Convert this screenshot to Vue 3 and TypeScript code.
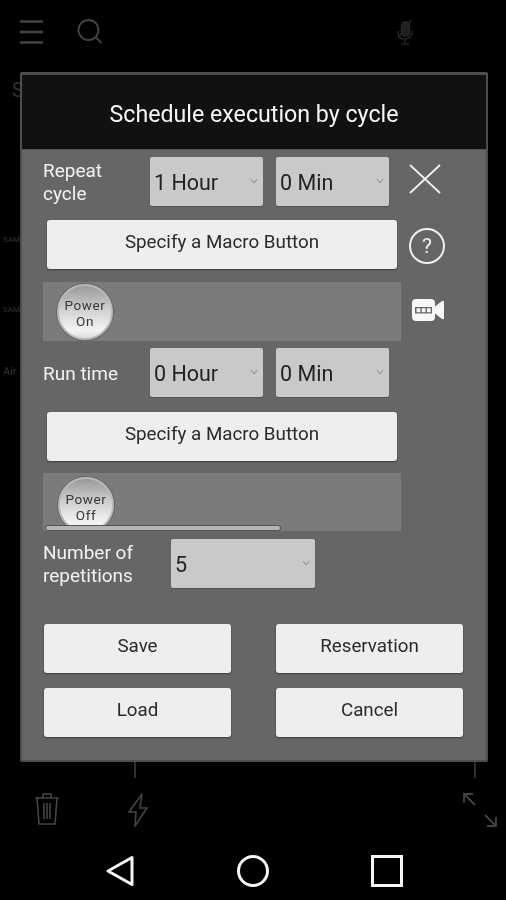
<template>
  <div class="screen">
    <!-- dimmed labels of the page under the dialog -->
    <span
      v-for="label in behindLabels"
      :key="label.text + label.top"
      class="behind"
      :style="{ top: label.top + 'px', fontSize: label.size + 'px' }"
    >{{ label.text }}</span>

    <header class="topbar">
      <svg class="ic-menu" width="26" height="26" viewBox="0 0 26 26" fill="none" stroke="#444" stroke-width="2.4">
        <path d="M2 2.500h23M2 13h23M2 23.500h23" />
      </svg>
      <svg class="ic-search" width="26" height="26" viewBox="0 0 26 26" fill="none" stroke="#444" stroke-width="1.8">
        <circle cx="11.500" cy="11" r="10" />
        <path d="M18.500 18l6 6" />
      </svg>
      <svg class="ic-mic" width="20" height="26" viewBox="0 0 20 26" fill="none" stroke="#262626" stroke-width="1.6">
        <rect x="6.500" y="3" width="8" height="14" rx="4" fill="#1e1e1e" />
        <path d="M3 12c0 5 3 8 7 8s7-3 7-8M10 20v4M6 25h8M3 19L16 1" />
      </svg>
    </header>

    <section class="dialog">
      <h1 class="title">Schedule execution by cycle</h1>
      <div class="body">
        <div class="row row-first">
          <div class="main fields">
            <label class="label">Repeat<br />cycle</label>
            <div v-for="v in ['1 Hour', '0 Min']" :key="v" class="select">
              <span>{{ v }}</span>
              <svg width="8" height="6" viewBox="0 0 8 6" fill="none" stroke="#8a8a8a" stroke-width="1"><path d="M1 1l3 4 3-4" /></svg>
            </div>
          </div>
          <div class="side">
            <svg class="ic-close" width="32" height="30" viewBox="0 0 32 30" fill="none" stroke="#f0f0f0" stroke-width="1.8">
              <path d="M1 1l30 28M31 1L1 29" />
            </svg>
          </div>
        </div>

        <div class="row row-macro">
          <div class="main"><button class="btn macro">Specify a Macro Button</button></div>
          <div class="side">
            <span class="help">?</span>
          </div>
        </div>

        <div class="row row-panel">
          <div class="main panel">
            <div class="power">Power<br />On</div>
          </div>
          <div class="side">
            <svg class="ic-video" width="32" height="24" viewBox="0 0 32 24">
              <path fill="#f7f7f7" d="M4 1h15a4 4 0 0 1 4 4v3.500L30 3h2v18h-2l-7-5.500V19a4 4 0 0 1-4 4H4a4 4 0 0 1-4-4V5a4 4 0 0 1 4-4z" />
              <path fill="#666" d="M3 9h17v6.500H3z" />
              <path fill="#f7f7f7" d="M4.500 10.300h3.800v4H4.500zM9.700 10.300h3.800v4H9.700zM14.900 10.300h3.800v4h-3.800z" />
            </svg>
          </div>
        </div>

        <div class="row row-run">
          <div class="main fields">
            <label class="label">Run time</label>
            <div v-for="v in ['0 Hour', '0 Min']" :key="v" class="select">
              <span>{{ v }}</span>
              <svg width="8" height="6" viewBox="0 0 8 6" fill="none" stroke="#8a8a8a" stroke-width="1"><path d="M1 1l3 4 3-4" /></svg>
            </div>
          </div>
        </div>

        <div class="row row-macro2">
          <div class="main"><button class="btn macro">Specify a Macro Button</button></div>
        </div>

        <div class="row row-panel2">
          <div class="main panel panel-off">
            <div class="power power-off">Power<br />Off</div>
            <div class="scrollbar"></div>
          </div>
        </div>

        <div class="row row-reps">
          <div class="main fields">
            <label class="label label-wide">Number of<br />repetitions</label>
            <div class="select select-wide">
              <span>5</span>
              <svg width="8" height="6" viewBox="0 0 8 6" fill="none" stroke="#8a8a8a" stroke-width="1"><path d="M1 1l3 4 3-4" /></svg>
            </div>
          </div>
        </div>

        <div class="actions">
          <button v-for="a in actions" :key="a" class="btn action">{{ a }}</button>
        </div>
      </div>
    </section>

    <div class="tools">
      <i class="tick tick-a"></i>
      <i class="tick tick-b"></i>
      <svg class="ic-trash" width="26" height="34" viewBox="0 0 26 34" fill="none" stroke="#444" stroke-width="1.6">
        <path d="M1 6h24M9 6V2h8v4M3 6l2 26h16l2-26M10 11v16M13 11v16M16 11v16" />
      </svg>
      <svg class="ic-bolt" width="22" height="34" viewBox="0 0 22 34" fill="none" stroke="#444" stroke-width="1.6">
        <path d="M15 1L2 19h7L8 33l12-18h-7z" />
      </svg>
      <svg class="ic-expand" width="36" height="36" viewBox="0 0 36 36" fill="none" stroke="#444" stroke-width="1.8">
        <path d="M2 11V2h9M2 2l11 11M34 25v9h-9M34 34L23 23" />
      </svg>
    </div>

    <nav class="navbar">
      <svg width="30" height="32" viewBox="0 0 30 32" fill="none" stroke="#f5f5f5" stroke-width="3">
        <path d="M27 2.500v27L3 16z" stroke-linejoin="round" />
      </svg>
      <svg width="32" height="32" viewBox="0 0 32 32" fill="none" stroke="#f5f5f5" stroke-width="3">
        <circle cx="16" cy="16" r="14.500" />
      </svg>
      <svg width="32" height="32" viewBox="0 0 32 32" fill="none" stroke="#f5f5f5" stroke-width="3">
        <rect x="1.500" y="1.500" width="29" height="29" />
      </svg>
    </nav>
  </div>
</template>

<script setup lang="ts">
const behindLabels = [
  { text: 'S', top: 78, size: 20 },
  { text: 'SAM', top: 235, size: 8 },
  { text: 'SAM', top: 305, size: 8 },
  { text: 'Air', top: 365, size: 11 },
]

const actions = ['Save', 'Reservation', 'Load', 'Cancel']
</script>

<style>
html,
body {
  background: #000;
}
</style>

<style scoped>
.screen {
  position: relative;
  width: 506px;
  height: 900px;
  overflow: hidden;
  background: #000;
  font-family: Roboto, 'Liberation Sans', sans-serif;
  filter: blur(0.5px);
}

.behind {
  position: absolute;
  left: 3px;
  color: #333;
  line-height: 1.2;
}
.behind:first-of-type {
  left: 12px;
}

.topbar {
  display: flex;
  align-items: center;
  height: 72px;
  padding: 0 0 8px 18px;
  box-sizing: border-box;
}
.ic-search {
  margin-left: 33px;
}
.ic-mic {
  margin-left: 292px;
}

.dialog {
  position: relative;
  width: 468px;
  height: 690px;
  margin-left: 20px;
  box-sizing: border-box;
  border: 2px solid #4e4e4e;
  border-top-width: 3px;
  border-radius: 2px;
  background: #666;
  display: flex;
  flex-direction: column;
}

.title {
  margin: 0;
  height: 75px;
  flex: none;
  display: flex;
  align-items: center;
  justify-content: center;
  padding-top: 3px;
  box-sizing: border-box;
  background: #111;
  border-bottom: 1px solid #555;
  color: #f6f6f6;
  font-size: 23.2px;
  font-weight: 400;
}

.body {
  padding: 7px 0 0 21px;
}

.row {
  display: flex;
  align-items: center;
}
.main {
  width: 358px;
  flex: none;
}
.side {
  width: 52px;
  display: flex;
  justify-content: center;
}

.ic-close {
  margin: -5px 5px 0 0;
}
.ic-video {
  margin: -4px 0 0 1px;
}

.help {
  width: 36px;
  height: 36px;
  margin-top: 3px;
  box-sizing: border-box;
  border: 2px solid #f0f0f0;
  border-radius: 50%;
  display: flex;
  align-items: center;
  justify-content: center;
  color: #f0f0f0;
  font-size: 21px;
}

.row-macro {
  margin-top: 14px;
}
.row-panel {
  margin-top: 13px;
}
.row-run {
  margin-top: 7px;
}
.row-macro2 {
  margin-top: 15px;
}
.row-panel2 {
  margin-top: 12px;
}
.row-reps {
  margin-top: 8px;
}

.fields {
  display: flex;
  align-items: center;
  gap: 13px;
}
.label {
  width: 94px;
  color: #f2f2f2;
  font-size: 19px;
  line-height: 23px;
  padding-top: 1px;
}
.label-wide {
  width: 115px;
}

.select {
  width: 113px;
  height: 49px;
  box-sizing: border-box;
  display: flex;
  align-items: center;
  justify-content: space-between;
  padding: 1px 5px 0 4px;
  border-radius: 2px;
  background: #c9c9c9;
  box-shadow: 0 1px 1px #505050;
  color: #222;
  font-size: 21.5px;
}
.select svg {
  margin-top: -3px;
}
.select-wide {
  width: 144px;
}

.btn {
  display: block;
  height: 49px;
  box-sizing: border-box;
  border: 0;
  border-radius: 3px;
  background: #eee;
  box-shadow: 0 1px 2px #3e3e3e;
  color: #2a2a2a;
  font-family: inherit;
  font-size: 18.8px;
  padding: 0 0 6px;
}
.macro {
  width: 350px;
  margin-left: 4px;
}

.panel {
  position: relative;
  height: 59px;
  box-sizing: border-box;
  padding: 2px 0 0 14px;
  overflow: hidden;
  background: #7c7b7b;
}
.panel-off {
  height: 58px;
  padding: 4px 0 0 15px;
}

.power {
  width: 56px;
  height: 56px;
  box-sizing: border-box;
  border: 2px solid #b9b9b9;
  border-radius: 50%;
  background: linear-gradient(#9a9a9a 0%, #d0d0d0 45%, #f4f4f4 85%, #dcdcdc 100%);
  box-shadow: 0 0 0 1px #666;
  color: #383838;
  font-size: 13.5px;
  line-height: 16px;
  letter-spacing: 0.6px;
  text-align: center;
  padding-top: 11px;
}
.power-off {
  padding-top: 12px;
}

.scrollbar {
  position: absolute;
  left: 3px;
  bottom: 1px;
  width: 234px;
  height: 4px;
  border-radius: 2px;
  background: #b5b5b5;
  box-shadow: 0 0 0 1px #555;
}

.actions {
  display: grid;
  grid-template-columns: 187px 187px;
  column-gap: 45px;
  row-gap: 15px;
  margin: 36px 0 0 1px;
}
.action {
  width: 187px;
  padding-bottom: 6px;
}

.tools {
  position: relative;
  height: 78px;
  display: flex;
  align-items: flex-start;
  padding: 30px 0 0 34px;
  box-sizing: border-box;
}
.tick {
  position: absolute;
  top: 0;
  width: 2px;
  height: 16px;
  background: #2e2e2e;
}
.tick-a {
  left: 134px;
}
.tick-b {
  left: 474px;
}
.ic-bolt {
  margin-left: 67px;
  margin-top: 1px;
}
.ic-expand {
  margin-left: 313px;
}

.navbar {
  display: flex;
  align-items: center;
  height: 60px;
  padding: 2px 0 0 105px;
  box-sizing: border-box;
  gap: 102px;
}
</style>
